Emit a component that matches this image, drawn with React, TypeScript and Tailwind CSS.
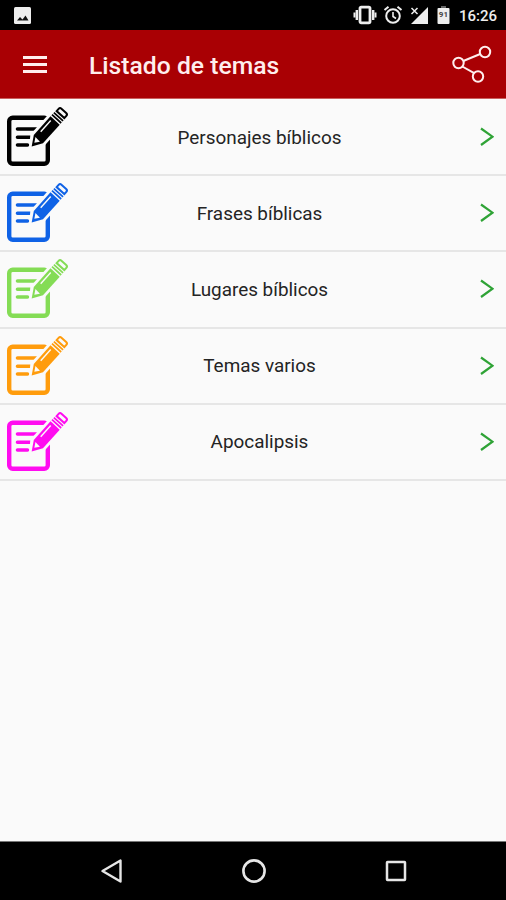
const topics = [
  { name: "Personajes bíblicos", color: "text-black" },
  { name: "Frases bíblicas", color: "text-[#0f62e6]" },
  { name: "Lugares bíblicos", color: "text-[#84dc55]" },
  { name: "Temas varios", color: "text-[#ff9c0c]" },
  { name: "Apocalipsis", color: "text-[#ff0cf0]" },
];

export default function App() {
  return (
    <div className="flex h-[900px] w-[506px] flex-col overflow-hidden bg-[#fafafa] font-['Roboto',sans-serif]">
      <StatusBar />

      {/* App bar */}
      <header className="flex h-[69px] shrink-0 items-center border-b border-[#c9605f] bg-[#a90004] pl-[23px] pr-[14px] text-[#ffeeee]">
        <svg viewBox="0 0 24 18" className="mt-px h-[18px] w-6" fill="currentColor">
          <path d="M0 0h24v3H0zM0 7h24v3H0zM0 14h24v3H0z" />
        </svg>
        <h1 className="ml-[42px] mt-1 flex-1 whitespace-nowrap text-[24.7px] font-medium leading-8">Listado de temas</h1>
        <svg viewBox="0 0 40 38" className="h-[38px] w-10" fill="none" stroke="currentColor" strokeWidth="2">
          <circle cx="6.5" cy="18" r="5.2" />
          <circle cx="33" cy="7" r="5.2" />
          <circle cx="26" cy="31.5" r="5.2" />
          <path d="M11.3 16 28.2 9M10.3 21.5 22.2 28.2" />
        </svg>
      </header>

      {/* Topics */}
      <ul className="flex-1 pt-px">
        {topics.map((topic) => (
          <li
            key={topic.name}
            className="flex h-[76.2px] items-center border-b-2 border-[#e6e6e6] pr-3"
          >
            <NoteIcon className={topic.color} />
            <span className="flex-1 whitespace-nowrap pl-px pr-[38px] pt-px text-center text-[18.9px] leading-6 text-[#242424]">
              {topic.name}
            </span>
            <svg viewBox="0 0 14 20" className="h-5 w-3.5" fill="none" stroke="#2fa336" strokeWidth="2.2">
              <path d="M1 1.5 12.5 9.7 1 18" />
            </svg>
          </li>
        ))}
      </ul>

      {/* Navigation bar */}
      <nav className="flex h-[59px] shrink-0 items-center justify-between border-t border-[#777] bg-black pl-[100px] pr-[98px]">
        <svg viewBox="0 0 24 26" className="h-[26px] w-6" fill="none" stroke="#e6e6e6" strokeWidth="2.4" strokeLinejoin="round">
          <path d="M20.5 2.5v21L2.5 13Z" />
        </svg>
        <svg viewBox="0 0 26 26" className="h-[26px] w-[26px]" fill="none" stroke="#e6e6e6" strokeWidth="2.6">
          <circle cx="13" cy="13" r="10.6" />
        </svg>
        <svg viewBox="0 0 24 24" className="h-6 w-6" fill="none" stroke="#e6e6e6" strokeWidth="2.5">
          <rect x="3" y="3" width="18" height="18" rx="0.5" />
        </svg>
      </nav>
    </div>
  );
}

function StatusBar() {
  return (
    <div className="flex h-[30px] shrink-0 items-center bg-black pl-3.5 pr-[9px] text-[#eeeeee]">
      <svg viewBox="0 0 17 17" className="h-[17px] w-[17px]">
        <rect width="17" height="17" rx="1.5" fill="currentColor" />
        <path d="M3 13.5 6 10l2.500 2.500L11.500 8.500l3 5Z" fill="#111" />
      </svg>

      <div className="ml-auto flex items-center">
        {/* Vibrate */}
        <svg viewBox="0 0 24 20" className="mr-[6px] h-5 w-6" fill="none" stroke="currentColor">
          <rect x="7" y="2.2" width="10" height="15.600" rx="1.2" strokeWidth="2.800" />
          <path d="M3.8 5v10M20.2 5v10" strokeWidth="2.400" />
          <path d="M1.500 7.5v5M22.500 7.5v5" strokeWidth="2" />
        </svg>
        {/* Alarm */}
        <svg viewBox="0 0 20 20" className="mr-[7px] h-5 w-5" fill="none" stroke="currentColor" strokeWidth="2">
          <circle cx="10" cy="11" r="6.800" />
          <path d="M10 7v4.500l3 2" strokeWidth="1.600" />
          <path d="M1.500 5 5.500 1.700M18.500 5l-4-3.300" />
        </svg>
        {/* Signal */}
        <svg viewBox="0 0 19 19" className="mr-[8px] h-[19px] w-[19px]">
          <path d="M18 1v17H1Z" fill="currentColor" />
          <path d="m1.5 2 6 6m0-6-6 6" stroke="currentColor" strokeWidth="1.5" />
        </svg>
        {/* Battery */}
        <div className="relative mr-[9px] flex h-[18px] w-[13px] items-center justify-center">
          <svg viewBox="0 0 13 18" className="absolute inset-0 h-full w-full">
            <path d="M4 0h5v2H4z" fill="#666" />
            <rect x="0.5" y="2" width="12" height="16" rx="1" fill="currentColor" />
          </svg>
          <span className="relative text-[8px] font-bold leading-none text-[#444]">91</span>
        </div>
        <span className="mt-0.5 text-[15px] font-medium leading-5">16:26</span>
      </div>
    </div>
  );
}

// Sheet of paper with a pencil laid over its corner
function NoteIcon({ className }: { className: string }) {
  return (
    <svg viewBox="0 1 76 76" className={`h-[76px] w-[76px] shrink-0 ${className}`} fill="none" stroke="currentColor">
      <rect x="9.2" y="19.700" width="38.6" height="46" rx="3.5" strokeWidth="4.4" />
      <path d="M17.5 31h19M17.5 39.2h13M17.5 47h10" strokeWidth="3.6" strokeLinecap="round" />
      <g transform="translate(31.7 48.500) rotate(-48)">
        <path d="M-4 0 8-9H52V9H8Z" fill="#fafafa" stroke="none" />
        <path d="M0 0 10-6.200H35V6.200H10Z" fill="currentColor" stroke="none" />
        <path d="M4.500-.5 9.500-3.500 9 3Z" fill="#fafafa" stroke="none" />
        <path d="M17-3.200H32" stroke="#fafafa" strokeWidth="1.400" />
        <path d="M37.200-6.200V6.200M40-6.200V6.200" strokeWidth="1.700" />
        <path d="M43-5.200h3q2 0 2 2v6.400q0 2-2 2h-3Z" strokeWidth="2" />
      </g>
    </svg>
  );
}
